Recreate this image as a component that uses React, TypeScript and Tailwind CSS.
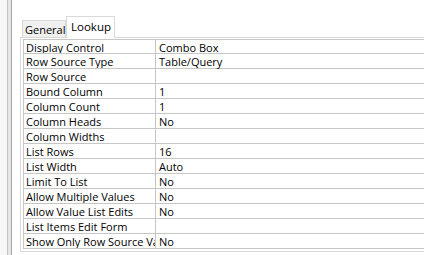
const rows: [string, string][] = [
  ["Display Control", "Combo Box"],
  ["Row Source Type", "Table/Query"],
  ["Row Source", ""],
  ["Bound Column", "1"],
  ["Column Count", "1"],
  ["Column Heads", "No"],
  ["Column Widths", ""],
  ["List Rows", "16"],
  ["List Width", "Auto"],
  ["Limit To List", "No"],
  ["Allow Multiple Values", "No"],
  ["Allow Value List Edits", "No"],
  ["List Items Edit Form", ""],
  ["Show Only Row Source Values", "No"],
];

export default function App() {
  return (
    <div className="flex h-[255px] w-[424px] overflow-hidden bg-white font-['Open_Sans',sans-serif] text-[11px] text-black">
      <div className="w-[7px] bg-[#f7f7f7]" />
      <div className="w-px bg-[#c4c4c4]" />
      <div className="w-[3px] bg-[#e6e6e6]" />
      <div className="w-px bg-[#a6a6a6]" />
      <div className="flex min-w-0 flex-1 flex-col pl-[8px] pt-[16px]">
        <div className="flex h-[21px] items-end pl-[2px]">
          <div className="flex h-[17px] w-[44px] items-center whitespace-nowrap border border-b-0 border-[#d9d9d9] bg-[#f0f0f0] pl-[2px] leading-none">
            General
          </div>
          <div className="relative z-10 -mb-px flex h-[22px] w-[49px] items-center border border-b-0 border-[#d9d9d9] bg-white pb-[2px] pl-[4px] text-[11.5px] leading-none">
            Lookup
          </div>
        </div>
        <div className="flex w-[420px] flex-col border-l border-t border-b border-[#d9d9d9] pb-[2px] pl-[2px] pt-px">
          <div className="flex flex-col border-l border-t border-[#c6c6c6]">
            {rows.map(([label, value], i) => (
              <div
                key={label}
                className={`flex border-b border-[#c6c6c6] leading-[13px] ${i === 0 ? "h-[14px]" : "h-[15px]"}`}
              >
                <div className="w-[132px] shrink-0 overflow-hidden whitespace-nowrap border-r border-[#c6c6c6] pl-[2px] pt-px">
                  {label}
                </div>
                <div className="flex-1 whitespace-nowrap pl-[3px] pt-px">{value}</div>
              </div>
            ))}
          </div>
        </div>
      </div>
    </div>
  );
}
